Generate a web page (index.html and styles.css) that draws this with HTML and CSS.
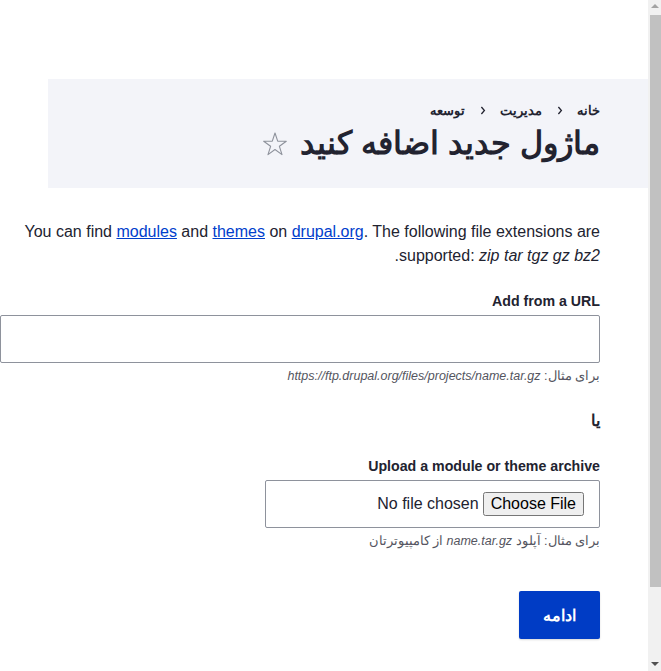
FILE: index.html
```html
<!DOCTYPE html>
<html lang="fa" dir="rtl">
<head>
<meta charset="utf-8">
<title>ماژول جدید اضافه کنید</title>
<link rel="stylesheet" href="styles.css">
</head>
<body>
<header class="page-header">
  <nav class="breadcrumb">
    <a class="crumb" href="#">خانه</a>
    <span class="sep"><svg width="6" height="9" viewBox="0 0 6 9"><path d="M1.4 1 L4.4 4.5 L1.4 8" fill="none" stroke="#222330" stroke-width="1.3"/></svg></span>
    <a class="crumb" href="#">مدیریت</a>
    <span class="sep"><svg width="6" height="9" viewBox="0 0 6 9"><path d="M1.4 1 L4.4 4.5 L1.4 8" fill="none" stroke="#222330" stroke-width="1.3"/></svg></span>
    <a class="crumb" href="#">توسعه</a>
  </nav>
  <div class="title-row">
    <h1 class="title">ماژول جدید اضافه کنید</h1>
    <a class="star" href="#"><svg width="26" height="26" viewBox="0 0 26 26"><polygon points="13,2 15.7,10.2 24.3,10.2 17.4,15.3 20,23.6 13,18.5 6,23.6 8.6,15.3 1.7,10.2 10.3,10.2" fill="none" stroke="#8e929c" stroke-width="1.1" stroke-linejoin="round"/></svg></a>
  </div>
</header>
<main class="content">
  <p class="intro">You can find <a href="#">modules</a> and <a href="#">themes</a> on <a href="#">drupal.org</a>. The following file extensions are supported: <em>zip tar tgz gz bz2</em>.</p>
  <div class="field">
    <label class="label" for="url">Add from a URL</label>
    <input class="text-input" id="url" type="text">
    <div class="desc">برای مثال: <em>https://ftp.drupal.org/files/projects/name.tar.gz</em></div>
  </div>
  <div class="or">یا</div>
  <div class="field">
    <label class="label" for="upload">Upload a module or theme archive</label>
    <input class="file-input" id="upload" type="file">
    <div class="desc">برای مثال: آپلود <em>name.tar.gz</em> از کامپیوترتان</div>
  </div>
  <div class="actions">
    <button class="button" type="submit">ادامه</button>
  </div>
</main>
<div class="scrollbar" aria-hidden="true">
  <div class="arrow arrow-up"></div>
  <div class="thumb"></div>
  <div class="arrow arrow-down"></div>
</div>
</body>
</html>
```
FILE: styles.css
```css
html, body {
  margin: 0;
  padding: 0;
}
body {
  font-family: "Liberation Sans", sans-serif;
  color: #222330;
  background: #fff;
  margin-right: 13px;
}
.page-header {
  margin: 79px 0 0 48px;
  background: #f3f4f9;
  padding: 23px 48px 25px 0;
  height: 109px;
  box-sizing: border-box;
}
.breadcrumb {
  display: flex;
  align-items: center;
  height: 16px;
  font-size: 12.6px;
  font-weight: bold;
}
.crumb {
  color: #222330;
  text-decoration: none;
}
.sep {
  display: flex;
  align-items: center;
  padding: 0 14px 0 15px;
}
.title-row {
  display: flex;
  align-items: center;
  margin-top: 5px;
  height: 40px;
}
.title {
  margin: 0;
  font-size: 32px;
  font-weight: bold;
  line-height: 40px;
}
.star {
  display: flex;
  margin-right: 12px;
  margin-top: 1px;
}
.content {
  margin: 0 48px 0 0;
  padding: 32px 0 116px;
}
.intro {
  margin: 0;
  font-size: 16px;
  line-height: 24px;
}
.intro a {
  color: #003ecc;
  text-decoration: underline;
}
.field {
  display: flex;
  flex-direction: column;
  align-items: flex-start;
  margin-top: 24px;
}
.label {
  font-size: 14.2px;
  font-weight: bold;
  line-height: 18px;
  margin-bottom: 5px;
}
.text-input {
  width: 100%;
  height: 48px;
  box-sizing: border-box;
  border: 1px solid #8e929c;
  border-radius: 2px;
  font-size: 16px;
  padding: 0 16px;
  margin: 0;
}
.file-input {
  width: 335px;
  height: 48px;
  box-sizing: border-box;
  border: 1px solid #8e929c;
  border-radius: 2px;
  font-family: "Liberation Sans", sans-serif;
  font-size: 16px;
  padding: 11px 15px;
  margin: 0;
  color: #222330;
}
.desc {
  margin-top: 5px;
  font-size: 12.5px;
  line-height: 17px;
  color: #545560;
}
.or {
  margin-top: 24px;
  font-weight: bold;
  font-size: 16px;
  line-height: 24px;
}
.actions {
  margin-top: 41px;
  display: flex;
}
.button {
  height: 48px;
  padding: 0 24px;
  border: 0;
  border-radius: 2px;
  background: #003cc5;
  color: #fff;
  font-family: "Liberation Sans", sans-serif;
  font-weight: bold;
  font-size: 16px;
  box-shadow: 0 1px 2px rgba(0,0,0,0.15);
}
.scrollbar {
  position: fixed;
  top: 0;
  right: 0;
  width: 13px;
  height: 100%;
  background: #f1f1f1;
  display: flex;
  flex-direction: column;
  align-items: center;
}
.arrow {
  width: 0;
  height: 0;
  border-left: 4px solid transparent;
  border-right: 4px solid transparent;
}
.arrow-up {
  margin-top: 4px;
  border-bottom: 4px solid #a3a3a3;
}
.arrow-down {
  margin-top: auto;
  margin-bottom: 5px;
  border-top: 4px solid #505050;
}
.thumb {
  margin-top: 7px;
  width: 11px;
  margin-right: -2px;
  height: 572px;
  background: #c1c1c1;
}
```
